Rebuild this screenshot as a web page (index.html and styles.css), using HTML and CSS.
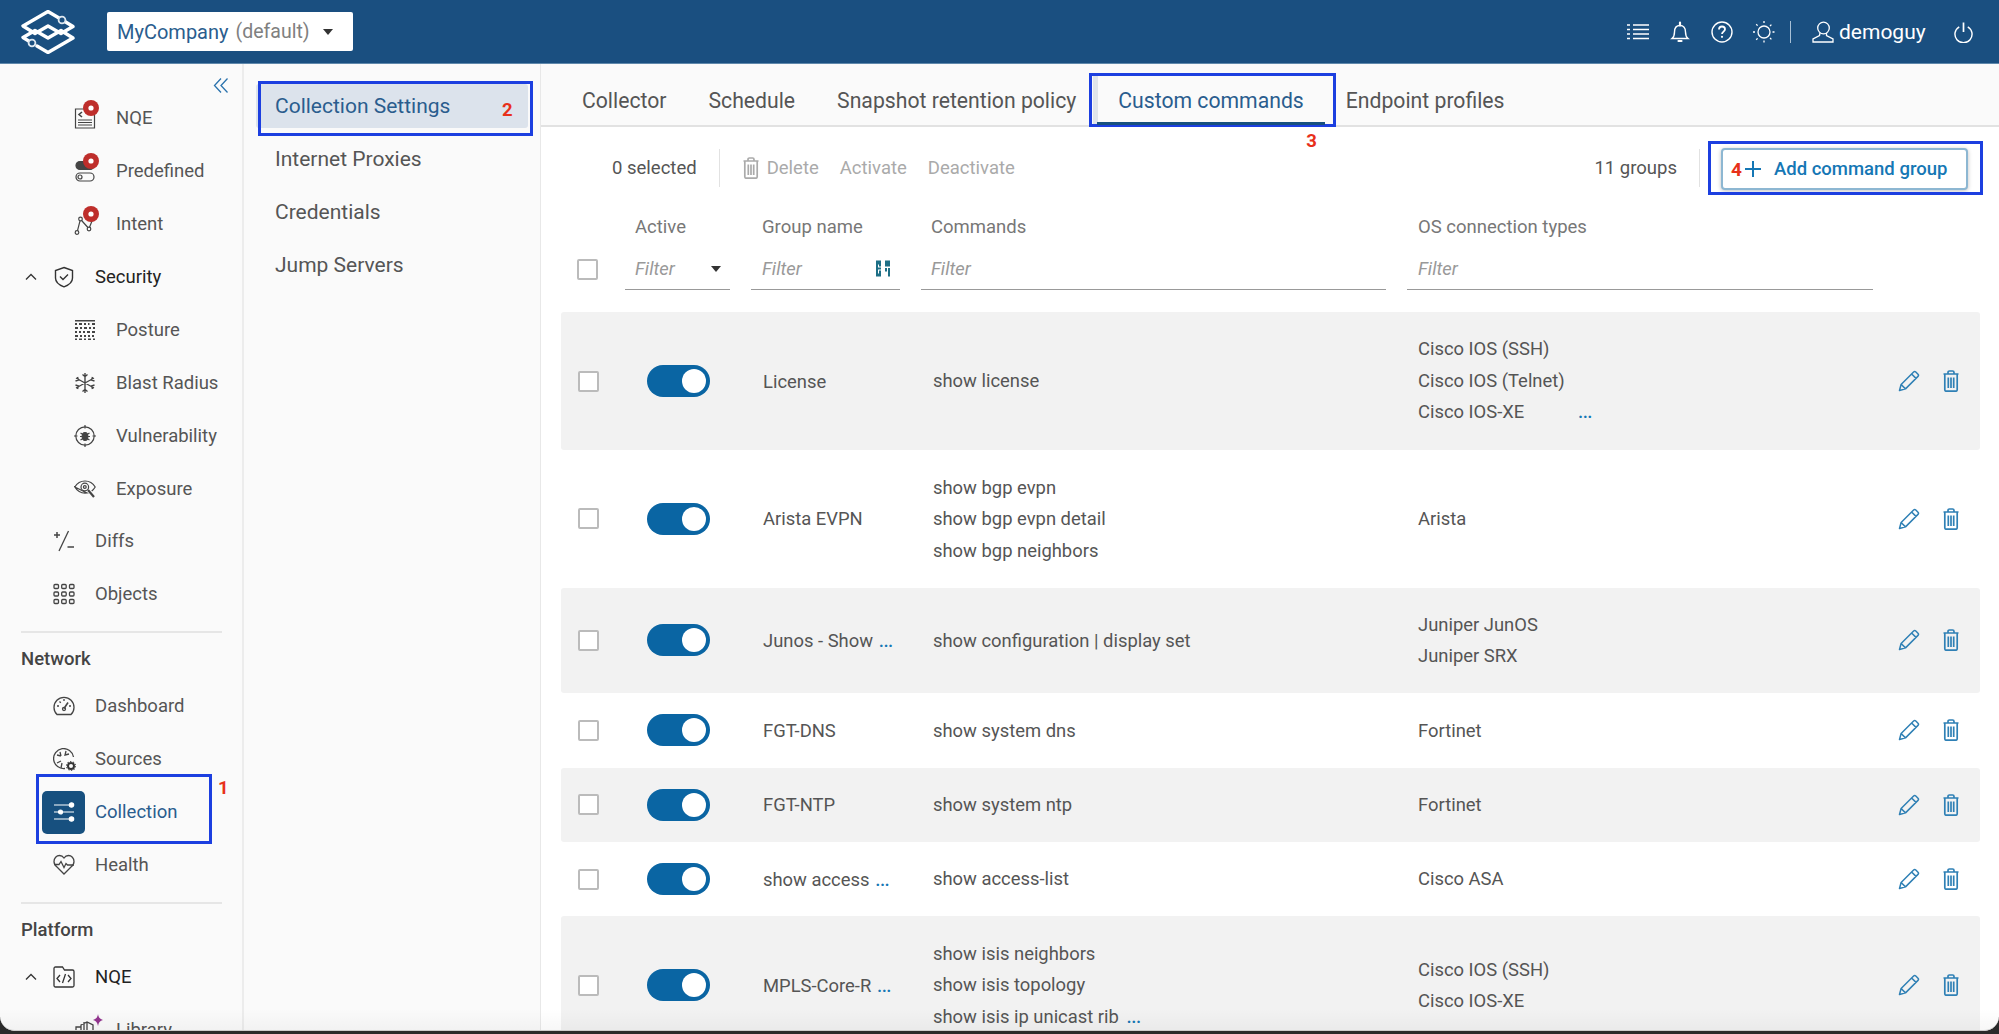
FILE: index.html
```html
<!DOCTYPE html>
<html lang="en">
<head>
<meta charset="utf-8">
<title>Collection Settings</title>
<link rel="stylesheet" href="styles.css">
</head>
<body>
<svg class="defs" width="0" height="0" aria-hidden="true">
  <symbol id="pencil" viewBox="0 0 22 22"><path d="M1.500 20.500l1.600-6L15.600 2a1.600 1.600 0 0 1 2.200 0l2.200 2.200a1.600 1.600 0 0 1 0 2.200L7.500 18.900zM3.100 14.500l4.400 4.400M13.600 4l4.400 4.400" fill="none" stroke="currentColor" stroke-width="1.500" stroke-linejoin="round"/></symbol>
  <symbol id="trash" viewBox="0 0 16 22"><path d="M.5 4h15M5 4V2.400C5 1.600 5.600 1 6.400 1h3.200c.8 0 1.400.6 1.400 1.400V4M1.800 4v15.800c0 .8.600 1.400 1.400 1.400h9.600c.8 0 1.400-.6 1.400-1.400V4" fill="none" stroke="currentColor" stroke-width="1.700"/><path d="M5.300 7.500v10.500M8 7.500v10.500M10.700 7.500v10.500" fill="none" stroke="currentColor" stroke-width="1.700"/></symbol>
  <symbol id="chev" viewBox="0 0 12 8"><path d="M1 6.500l5-5 5 5" fill="none" stroke="currentColor" stroke-width="1.300"/></symbol>
  <symbol id="badge" viewBox="0 0 16 16"><circle cx="8" cy="8" r="8" fill="#be2e2b"/><circle cx="8" cy="8" r="2.600" fill="#fff"/></symbol>
</svg>

<header class="topbar">
  <svg class="logo" viewBox="21 10 54 44" aria-label="Logo">
    <g fill="none" stroke="#fff" stroke-width="3.400" stroke-linejoin="round" stroke-linecap="round">
      <path d="M59 18L48 11.500 23 26l12 7.500 13-7.500 13 7.500 12-7-9-5.500"/>
      <path d="M37 46l11 6.500L73 38l-12-7.500-13 7.500-13-7.500-12 7 9 5.500"/>
    </g>
    <circle cx="62" cy="20" r="3.400" fill="#1a4f80" stroke="#dfe8f0" stroke-width="1.800"/>
    <circle cx="32" cy="43" r="3.400" fill="#1a4f80" stroke="#dfe8f0" stroke-width="1.800"/>
  </svg>
  <div class="org-select">
    <span class="org-name">MyCompany</span><span class="org-default">(default)</span>
    <span class="caret"></span>
  </div>
  <div class="top-actions">
    <svg class="top-icon" viewBox="0 0 22 22" fill="none" stroke="#fff" stroke-width="1.300"><path d="M6 4h16M6 8.500h16M6 13h16M6 17.500h16M0 4h3M0 8.500h3M0 13h3M0 17.500h3"/></svg>
    <svg class="top-icon" viewBox="0 0 22 22" fill="none" stroke="#fff" stroke-width="1.400"><path d="M3 17.500h16c-1.800-1.500-2.500-3-2.500-6.500 0-4-2-6.500-5.500-6.500S5.500 7 5.500 11c0 3.500-.7 5-2.500 6.500z"/><path d="M11 1.500v3M9.500 20h3" stroke-width="2.200" stroke-linecap="round"/></svg>
    <svg class="top-icon" viewBox="0 0 22 22" fill="none" stroke="#fff" stroke-width="1.400"><circle cx="11" cy="11" r="10"/><path d="M8 8.500c0-1.800 1.300-3 3-3s3 1.100 3 2.800c0 2.200-3 2.400-3 4.700" stroke-width="1.800"/><circle cx="11" cy="15.800" r="1.100" fill="#fff" stroke="none"/></svg>
    <svg class="top-icon" viewBox="0 0 22 22" fill="none" stroke="#fff" stroke-width="1.300"><circle cx="11" cy="11" r="6"/><path d="M11 0v2.500M11 19.500V22M0 11h2.500M19.500 11H22M3.200 3.200L5 5M17 17l1.800 1.800M3.200 18.800L5 17M17 5l1.800-1.800" stroke-dasharray="2 1"/></svg>
    <span class="top-sep"></span>
    <svg class="top-icon user-icon" viewBox="0 0 22 22" fill="none" stroke="#fff" stroke-width="1.300"><circle cx="11.500" cy="7" r="5.800"/><path d="M8 12l-.5 2.500L1 18v3h20v-3l-6.500-3.500L14.500 12"/></svg>
    <span class="user-name">demoguy</span>
    <svg class="power-icon" viewBox="0 0 20 22" fill="none" stroke="#fff" stroke-width="1.500"><path d="M5.500 5.500a9 9 0 1 0 9 0"/><path d="M10 1v10" stroke-width="1.800"/></svg>
  </div>
</header>

<div class="shell">
  <nav class="sidenav">
    <div class="collapse-row">
      <svg class="collapse" viewBox="0 0 16 16" fill="none" stroke="#2a72ad" stroke-width="1.300"><path d="M8 1L1.500 8 8 15M14.500 1L8 8l6.500 7"/></svg>
    </div>
    <a class="nav-item lvl2"><span class="nav-icon">
      <svg viewBox="0 0 22 22" fill="none" stroke="#444" stroke-width="1.200"><path d="M1.500 2h19v19h-19z"/><path d="M4 13h14M4 15.500h14M4 18h14"/><path d="M8 5L5 7.500 8 10" stroke-width="1.600"/></svg>
      <svg class="badge"><use href="#badge"/></svg></span>NQE</a>
    <a class="nav-item lvl2"><span class="nav-icon">
      <svg viewBox="0 0 22 22" fill="none" stroke="#444" stroke-width="1.200"><rect x="2" y="1.500" width="18" height="8" rx="4" fill="#444"/><rect x="2" y="13" width="18" height="8" rx="4"/><circle cx="6" cy="17" r="2"/></svg>
      <svg class="badge"><use href="#badge"/></svg></span>Predefined</a>
    <a class="nav-item lvl2"><span class="nav-icon">
      <svg viewBox="0 0 22 22" fill="none" stroke="#444" stroke-width="1.200"><circle cx="3" cy="19.500" r="1.800"/><circle cx="6.500" cy="6" r="1.800"/><circle cx="15" cy="16" r="1.800"/><circle cx="18" cy="6" r="1.800"/><path d="M3.500 17.700L6 7.800M7.600 7.500l6.300 7M15.500 14.300L18 8"/></svg>
      <svg class="badge"><use href="#badge"/></svg></span>Intent</a>

    <a class="nav-item lvl0 dark"><svg class="chevron"><use href="#chev"/></svg><span class="nav-icon">
      <svg viewBox="0 0 22 22" fill="none" stroke="#333" stroke-width="1.400"><path d="M11 1.500l8.500 3V12c0 4.500-4 7.200-8.500 8.800C6.500 19.200 2.500 16.500 2.500 12V4.500z"/><path d="M7 10.500l3 3 5-5"/></svg></span>Security</a>
    <a class="nav-item lvl2"><span class="nav-icon">
      <svg viewBox="0 0 22 22" fill="#444"><path d="M1 1h20v1.500H1zM1 4h2v2H1zM5 4h3v2H5zM10 4h2v2h-2zM14 4h1.500v2H14zM18 4h3v2h-3zM1 8h3v2H1zM6 8h2v2H6zM10 8h3v2h-3zM15 8h2v2h-2zM19 8h2v2h-2zM1 12h2v2H1zM5 12h2v2H5zM9 12h2v2H9zM13 12h3v2h-3zM18 12h3v2h-3zM1 16h3v2H1zM6 16h2v2H6zM10 16h2v2h-2zM14 16h2v2h-2zM18 16h2v2h-2zM1 19.500h2V21H1zM5 19.500h3V21H5zM10 19.500h2V21h-2zM14 19.500h3V21h-3zM19 19.500h2V21h-2z"/></svg></span>Posture</a>
    <a class="nav-item lvl2"><span class="nav-icon">
      <svg viewBox="0 0 22 22" fill="none" stroke="#444" stroke-width="1.400"><path d="M11 1v20M2 6l18 10M2 16L20 6M8.500 2.500l2.500 2 2.500-2M8.500 19.500l2.500-2 2.500 2M1.500 9l3-1-1-3M18.500 5l-1 3 3 1M1.500 13l3 1-1 3M20.500 13l-3 1 1 3"/></svg></span>Blast Radius</a>
    <a class="nav-item lvl2"><span class="nav-icon">
      <svg viewBox="0 0 22 22" fill="none" stroke="#444" stroke-width="1.200"><circle cx="11" cy="11" r="9.200"/><path d="M11 0v3.500M11 18.500V22M0 11h3.500M18.500 11H22"/><ellipse cx="11" cy="11.500" rx="2.800" ry="4" fill="#444"/><path d="M6.500 8l2.500 1.500M15.500 8L13 9.500M6 11.500h3M16 11.500h-3M6.500 15l2.500-1.500M15.500 15L13 13.500"/></svg></span>Vulnerability</a>
    <a class="nav-item lvl2"><span class="nav-icon">
      <svg viewBox="0 0 22 22" fill="none" stroke="#444" stroke-width="1.200"><path d="M.8 9C3.500 4.500 7 3 11 3s7.500 1.500 10.200 6c-1 1.700-2.200 3-3.500 4M13 15c-.7.100-1.300.100-2 .100C7 15.100 3.500 13.500.8 9z"/><circle cx="10.800" cy="9" r="3.800"/><circle cx="10.800" cy="9" r="1.400"/><path d="M14 12l6 7" stroke-width="2.200"/></svg></span>Exposure</a>
    <a class="nav-item lvl1"><span class="nav-icon">
      <svg viewBox="0 0 22 22" fill="none" stroke="#444" stroke-width="1.300"><path d="M15.500 1L6 21"/><path d="M1 5h6M4 2v6M14.500 17H21" stroke-width="1.500"/></svg></span>Diffs</a>
    <a class="nav-item lvl1"><span class="nav-icon">
      <svg viewBox="0 0 22 22" fill="none" stroke="#444" stroke-width="1.300"><rect x="1" y="1.500" width="4.500" height="4" rx="1"/><rect x="8.700" y="1.500" width="4.500" height="4" rx="1"/><rect x="16.500" y="1.500" width="4.500" height="4" rx="1"/><rect x="1" y="9" width="4.500" height="4" rx="1"/><rect x="8.700" y="9" width="4.500" height="4" rx="1"/><rect x="16.500" y="9" width="4.500" height="4" rx="1"/><rect x="1" y="16.500" width="4.500" height="4" rx="1"/><rect x="8.700" y="16.500" width="4.500" height="4" rx="1"/><rect x="16.500" y="16.500" width="4.500" height="4" rx="1"/></svg></span>Objects</a>
    <div class="nav-divider"></div>
    <div class="nav-section">Network</div>
    <a class="nav-item lvl1"><span class="nav-icon">
      <svg viewBox="0 0 22 22" fill="none" stroke="#444" stroke-width="1.300"><path d="M4 19.500a10 10 0 1 1 14 0z"/><path d="M11 13.500l4-6" stroke-width="1.600"/><circle cx="11" cy="14" r="1.500"/><path d="M4 11h2M16 11h2M6.500 6.500l1.300 1.300M11 4v2"/></svg></span>Dashboard</a>
    <a class="nav-item lvl1"><span class="nav-icon">
      <svg viewBox="0 0 22 22" fill="none" stroke="#444" stroke-width="1.300"><path d="M12 20.500A10 10 0 1 1 20.500 9"/><path d="M4 7l4 1M7 4l1 4M4 15l4-2M13 3l-1 4 4-1M8 20l1-5"/></svg><svg class="gear" viewBox="0 0 10 10"><circle cx="5" cy="5" r="3" fill="none" stroke="#333" stroke-width="2"/><circle cx="5" cy="5" r="4.800" fill="none" stroke="#333" stroke-width="1.200" stroke-dasharray="1.500 1.500"/></svg></span>Sources</a>
    <a class="nav-item lvl1 current">
      <span class="icon-tile"><svg viewBox="0 0 22 22" fill="none" stroke="#fff" stroke-width="1.200"><path d="M1 4h15M1 11h4M10 11h11M1 18h15"/><circle cx="18.500" cy="4" r="2.200" fill="#fff"/><circle cx="7.500" cy="11" r="2" fill="#fff"/><circle cx="18.500" cy="18" r="2.200" fill="#fff"/></svg></span>Collection
      <span class="mark mark-1"></span><span class="num num-1">1</span>
    </a>
    <a class="nav-item lvl1"><span class="nav-icon">
      <svg viewBox="0 0 22 22" fill="none" stroke="#444" stroke-width="1.300"><path d="M4 13C2 11.500 1 9.500 1 7.500 1 4 3.500 1.500 6.500 1.500c2 0 3.500 1 4.500 2.500 1-1.500 2.500-2.500 4.500-2.500 3 0 5.500 2.500 5.500 6 0 2-1 4-3 5.500l-7 7z"/><path d="M1 10.500h5l2-3 3 6 2-4 1.500 1.500H21" fill="#fafafa"/></svg></span>Health</a>
    <div class="nav-divider"></div>
    <div class="nav-section">Platform</div>
    <a class="nav-item lvl0 dark"><svg class="chevron"><use href="#chev"/></svg><span class="nav-icon">
      <svg viewBox="0 0 22 22" fill="none" stroke="#333" stroke-width="1.300"><path d="M1 2.500C1 1.600 1.600 1 2.500 1h7l2 3h8c.9 0 1.500.6 1.500 1.500v14c0 .9-.6 1.500-1.500 1.500h-17C1.600 21 1 20.400 1 19.500z"/><path d="M7 9l-3 3.500L7 16M15 9l3 3.500-3 3.500M12.500 8l-3 9"/></svg></span>NQE</a>
    <a class="nav-item lvl2"><span class="nav-icon">
      <svg viewBox="0 0 22 22" fill="none" stroke="#444" stroke-width="1.300"><path d="M2 8h5v13H2zM7 6l6-3 6 3v15H7zM10 3v18M13 3v18"/></svg>
      <svg class="spark" viewBox="0 0 16 16"><path d="M8 2c.5 3.500 2 5 5 6-3 1-4.500 2.500-5 6-.5-3.500-2-5-5-6 3-1 4.500-2.500 5-6z" fill="#93358f"/></svg></span>Library</a>
  </nav>

  <aside class="subnav">
    <a class="sub-item selected">Collection Settings<span class="mark mark-2"></span><span class="num num-2">2</span></a>
    <a class="sub-item">Internet Proxies</a>
    <a class="sub-item">Credentials</a>
    <a class="sub-item">Jump Servers</a>
  </aside>

  <main class="content">
    <div class="tabs">
      <a class="tab">Collector</a>
      <a class="tab">Schedule</a>
      <a class="tab">Snapshot retention policy</a>
      <a class="tab active">Custom commands<span class="mark mark-3"></span><span class="num num-3">3</span></a>
      <a class="tab">Endpoint profiles</a>
    </div>

    <div class="panel">
      <div class="toolbar">
        <span class="sel-count">0 selected</span>
        <span class="tool-sep"></span>
        <svg class="tool-trash"><use href="#trash"/></svg>
        <span class="tool-btn first">Delete</span>
        <span class="tool-btn">Activate</span>
        <span class="tool-btn">Deactivate</span>
        <span class="group-count">11 groups</span>
        <span class="tool-sep right"></span>
        <button class="add-btn"><span class="num num-4">4</span><span class="plus"></span>Add command group<span class="mark mark-4"></span></button>
      </div>

      <div class="grid head-labels">
        <span></span><span>Active</span><span>Group name</span><span>Commands</span><span>OS connection types</span>
      </div>
      <div class="grid head-filters">
        <span class="check head-check"></span>
        <span class="filter">Filter<i class="caret small"></i></span>
        <span class="filter">Filter
          <svg class="regex" viewBox="0 0 14 16"><path d="M0 0h5v6H3V4H2v3h3v2H2v4h1v-3h2v6H0zM9 0h5v6H9zM9 7.500h2V11H9zM12 7.500h2V16h-2z" fill="#1d6f86" fill-rule="evenodd"/></svg>
        </span>
        <span class="filter">Filter</span>
        <span class="filter">Filter</span>
      </div>

      <div class="grid row shaded">
        <span class="check"></span><span class="toggle"></span>
        <span class="name">License</span>
        <div class="lines"><span>show license</span></div>
        <div class="lines"><span>Cisco IOS (SSH)</span><span>Cisco IOS (Telnet)</span><span>Cisco IOS-XE<b class="more wide">...</b></span></div>
        <div class="acts"><svg class="act-pencil"><use href="#pencil"/></svg><svg class="act-trash"><use href="#trash"/></svg></div>
      </div>
      <div class="grid row">
        <span class="check"></span><span class="toggle"></span>
        <span class="name">Arista EVPN</span>
        <div class="lines"><span>show bgp evpn</span><span>show bgp evpn detail</span><span>show bgp neighbors</span></div>
        <div class="lines"><span>Arista</span></div>
        <div class="acts"><svg class="act-pencil"><use href="#pencil"/></svg><svg class="act-trash"><use href="#trash"/></svg></div>
      </div>
      <div class="grid row shaded">
        <span class="check"></span><span class="toggle"></span>
        <span class="name">Junos - Show<b class="more">...</b></span>
        <div class="lines"><span>show configuration | display set</span></div>
        <div class="lines"><span>Juniper JunOS</span><span>Juniper SRX</span></div>
        <div class="acts"><svg class="act-pencil"><use href="#pencil"/></svg><svg class="act-trash"><use href="#trash"/></svg></div>
      </div>
      <div class="grid row">
        <span class="check"></span><span class="toggle"></span>
        <span class="name">FGT-DNS</span>
        <div class="lines"><span>show system dns</span></div>
        <div class="lines"><span>Fortinet</span></div>
        <div class="acts"><svg class="act-pencil"><use href="#pencil"/></svg><svg class="act-trash"><use href="#trash"/></svg></div>
      </div>
      <div class="grid row shaded">
        <span class="check"></span><span class="toggle"></span>
        <span class="name">FGT-NTP</span>
        <div class="lines"><span>show system ntp</span></div>
        <div class="lines"><span>Fortinet</span></div>
        <div class="acts"><svg class="act-pencil"><use href="#pencil"/></svg><svg class="act-trash"><use href="#trash"/></svg></div>
      </div>
      <div class="grid row">
        <span class="check"></span><span class="toggle"></span>
        <span class="name">show access<b class="more">...</b></span>
        <div class="lines"><span>show access-list</span></div>
        <div class="lines"><span>Cisco ASA</span></div>
        <div class="acts"><svg class="act-pencil"><use href="#pencil"/></svg><svg class="act-trash"><use href="#trash"/></svg></div>
      </div>
      <div class="grid row shaded">
        <span class="check"></span><span class="toggle"></span>
        <span class="name">MPLS-Core-R<b class="more">...</b></span>
        <div class="lines"><span>show isis neighbors</span><span>show isis topology</span><span>show isis ip unicast rib<b class="more gap">...</b></span></div>
        <div class="lines"><span>Cisco IOS (SSH)</span><span>Cisco IOS-XE</span></div>
        <div class="acts"><svg class="act-pencil"><use href="#pencil"/></svg><svg class="act-trash"><use href="#trash"/></svg></div>
      </div>
    </div>
  </main>
</div>
<div class="window-edge"></div>
</body>
</html>
```

FILE: styles.css
```css
* { box-sizing: border-box; }
html, body { height: 100%; }
body {
  margin: 0;
  height: 1034px;
  overflow: hidden;
  position: relative;
  font-family: Roboto, "Liberation Sans", sans-serif;
  color: #555;
  background: #fafafa;
}
.defs { position: absolute; }
svg { display: block; }

/* top bar */
.topbar {
  height: 64px;
  background: #1a4f80;
  display: flex;
  align-items: center;
  border-bottom: 1px solid #5f88ab;
  padding-left: 21px;
}
.logo { width: 54px; height: 44px; margin-right: 32px; }
.org-select {
  width: 246px;
  height: 39px;
  background: #fff;
  border-radius: 2px;
  display: flex;
  align-items: center;
  padding-left: 10px;
  font-size: 20px;
}
.org-name { color: #2a5d8e; margin-right: 7px; }
.org-default { color: #808080; font-size: 19.500px; }
.caret {
  width: 0;
  height: 0;
  margin-left: 13px;
  border-left: 5.500px solid transparent;
  border-right: 5.500px solid transparent;
  border-top: 6px solid #333;
}
.top-actions {
  margin-left: auto;
  display: flex;
  align-items: center;
  padding-right: 26px;
  color: #fff;
}
.top-icon { width: 22px; height: 22px; margin-right: 20px; }
.top-sep { width: 1px; height: 22px; background: #a8c0d6; margin: 0 21px 0 -5px; }
.user-icon { margin-right: 5px; }
.user-name { font-size: 21px; margin-right: 28px; width: 87px; }
.power-icon { width: 19px; height: 22px; }

.shell { display: flex; height: 970px; }

/* first nav */
.sidenav {
  width: 244px;
  flex: none;
  background: #fafafa;
  border-right: 2px solid #ececec;
}
.collapse-row {
  height: 27.500px;
  display: flex;
  justify-content: flex-end;
  align-items: flex-end;
  padding-right: 13px;
}
.collapse { width: 16px; height: 17px; margin-bottom: -2px; }
.nav-item {
  height: 52.950px;
  display: flex;
  align-items: center;
  font-size: 18.500px;
  color: #555;
  position: relative;
}
.nav-item.dark { color: #222; }
.lvl2 { padding-left: 74px; }
.lvl1 { padding-left: 53px; }
.lvl0 { padding-left: 25px; }
.chevron { width: 12px; height: 8px; margin-right: 16px; color: #333; }
.nav-icon {
  width: 22px;
  height: 22px;
  margin-right: 20px;
  position: relative;
  flex: none;
}
.nav-icon > svg:first-child { width: 22px; height: 22px; }
.badge { position: absolute; width: 16px; height: 16px; top: -7px; right: -3px; }
.gear { position: absolute; width: 10px; height: 10px; right: -1px; bottom: -1px; background: #fafafa; border-radius: 50%; }
.spark { position: absolute; width: 16px; height: 16px; top: -7px; right: -10px; }
.nav-divider { height: 2px; background: #e6e6e6; margin: 10px 20px 0 21px; }
.nav-section {
  height: 47px;
  padding-top: 5px;
  display: flex;
  align-items: center;
  padding-left: 21px;
  font-size: 18.500px;
  font-weight: 500;
  color: #444;
}
.icon-tile {
  width: 43px;
  height: 43px;
  margin: 0 10px 0 -11px;
  border-radius: 5px;
  background: #17507f;
  display: flex;
  align-items: center;
  justify-content: center;
  flex: none;
}
.icon-tile svg { width: 22px; height: 22px; }
.current { color: #2a5d8e; }

/* annotations */
.mark {
  position: absolute;
  border: 3px solid #1c3fe0;
  pointer-events: none;
}
.num {
  position: absolute;
  color: #e8301a;
  font-weight: 700;
  font-size: 18.500px;
  line-height: 1;
}
.mark-1 { left: 36px; top: -12px; width: 176px; height: 70px; }
.num-1 { left: 218px; top: -7px; }
.mark-2 { left: 2px; top: -3px; width: 275px; height: 55px; }
.num-2 { left: 246px; top: 17px; }
.mark-3 { left: -8px; top: 9px; width: 247px; height: 54px; }
.num-3 { left: 209px; top: 68px; }
.mark-4 { left: -15px; top: -9px; width: 275px; height: 54px; }
.num-4 { left: 8px; top: 10px; font-size: 19px; }

/* second nav */
.subnav {
  width: 297px;
  flex: none;
  background: #fafafa;
  border-right: 1px solid #e8e8e8;
  padding-top: 20px;
}
.sub-item {
  height: 53px;
  display: flex;
  align-items: center;
  margin-right: 12px;
  margin-left: 12px;
  padding-left: 19px;
  font-size: 21px;
  color: #555;
  position: relative;
  border-radius: 3px;
}
.sub-item.selected { background: #dce3ec; color: #2a5d8e; height: 44px; margin-bottom: 4.500px; }

/* content */
.content { flex: 1; min-width: 0; background: #fff; }
.tabs {
  height: 63px;
  background: #fafafa;
  border-bottom: 2px solid #e2e2e2;
  display: flex;
  padding-left: 20px;
}
.tab {
  padding: 12px 21px 0;
  height: 61px;
  display: flex;
  align-items: center;
  font-size: 21.200px;
  color: #555;
  position: relative;
}
.tab.active { color: #2a5d8e; }
.tab.active::before {
  content: "";
  position: absolute;
  left: -4px;
  top: 12px;
  bottom: 0;
  width: 5px;
  background: #dfe4ea;
}
.tab.active::after {
  content: "";
  position: absolute;
  left: 0;
  right: 0;
  bottom: 0;
  height: 3px;
  background: #17507f;
}
.panel { padding: 0 19px 0 20px; }
.toolbar {
  height: 82px;
  display: flex;
  align-items: center;
  font-size: 18.500px;
}
.sel-count { margin-left: 51px; color: #555; }
.tool-sep { width: 1px; height: 38px; background: #e2e2e2; margin-left: 22px; }
.tool-trash { width: 16px; height: 22px; color: #aaa; margin-left: 23px; }
.tool-btn { color: #aaa; margin-left: 21px; }
.tool-btn.first { margin-left: 8px; }
.group-count { margin-left: auto; color: #555; }
.tool-sep.right { margin-left: 22px; }
.add-btn {
  position: relative;
  width: 247px;
  height: 42px;
  margin: 2px 12px 0 21px;
  padding: 0 0 0 51px;
  text-align: left;
  border: 2px solid #8db7d2;
  border-radius: 4px;
  background: #fff;
  box-shadow: 0 1px 4px rgba(0,0,0,.25);
  color: #1577b5;
  font: 500 18.500px Roboto, sans-serif;
}
.plus {
  position: absolute;
  left: 22px;
  top: 11px;
  width: 16px;
  height: 16px;
  background:
    linear-gradient(#1577b5, #1577b5) center / 100% 2px no-repeat,
    linear-gradient(#1577b5, #1577b5) center / 2px 100% no-repeat;
}

/* table */
.grid {
  display: grid;
  grid-template-columns: 43px 105px 149px 465px 466px 1fr;
  column-gap: 21px;
  align-items: center;
}
.head-labels { height: 35px; font-size: 18.500px; color: #777; }
.head-labels span { padding-left: 10px; }
.head-labels span:nth-child(3), .head-labels span:nth-child(5) { padding-left: 11px; }
.head-filters { height: 68px; align-items: start; padding-top: 4px; }
.filter {
  height: 42px;
  border-bottom: 1px solid #999;
  padding: 0 10px;
  font-size: 18.400px;
  font-style: italic;
  color: #999;
  display: flex;
  align-items: center;
  justify-content: space-between;
}
.filter:nth-child(3), .filter:nth-child(5) { padding-left: 11px; }
.caret.small { border-top-color: #333; margin: 0 -1px 0 0; }
.regex { width: 14px; height: 17px; margin-right: 0; }
.check {
  width: 21px;
  height: 21px;
  margin-left: 17px;
  background: #fff;
  border: 2px solid #bbb;
  border-radius: 2px;
}
.head-check { margin-top: 11px; margin-left: 16px; }
.row {
  padding: 21.400px 0;
  font-size: 18.400px;
  color: #555;
  border-radius: 3px;
}
.row.shaded { background: #f2f2f2; }
.toggle {
  width: 63px;
  height: 32px;
  margin: -1px 0 -1px 22px;
  border-radius: 16px;
  background: #0a65a3;
  position: relative;
}
.toggle::after {
  content: "";
  position: absolute;
  right: 4px;
  top: 4px;
  width: 24px;
  height: 24px;
  border-radius: 50%;
  background: #fff;
}
.name { padding-left: 12px; white-space: nowrap; }
.lines { display: flex; flex-direction: column; padding-left: 11px; line-height: 31.500px; }
.name + .lines { padding-left: 12px; }
.more { color: #1577b5; font-weight: 700; font-size: 16px; margin-left: 6px; }
.more.wide { margin-left: 54px; }
.more.gap { margin-left: 8px; }
.acts { display: flex; align-items: center; color: #2f80b5; padding-left: 4px; }
.act-pencil { width: 22px; height: 22px; }
.act-trash { width: 16px; height: 22px; margin-left: 23px; }

/* bottom window edge */
.window-edge {
  position: absolute;
  left: 0;
  right: 0;
  bottom: 0;
  height: 34px;
  overflow: hidden;
  pointer-events: none;
}
.window-edge::before {
  content: "";
  position: absolute;
  inset: 0 0 3px 0;
  border-radius: 0 0 15px 15px;
  box-shadow: 0 0 0 30px #2a2a2a;
  background: linear-gradient(rgba(0,0,0,0) 30%, rgba(0,0,0,.03));
  border-bottom: 1px solid #ccc;
}
```
